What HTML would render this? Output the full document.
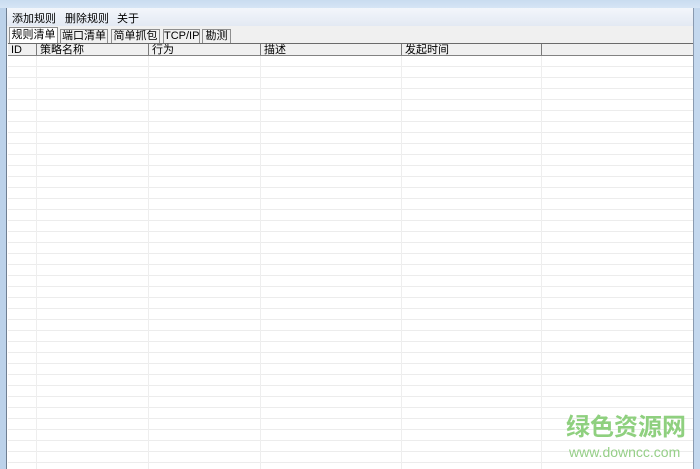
<!DOCTYPE html>
<html><head><meta charset="utf-8"><style>
*{margin:0;padding:0;box-sizing:border-box}
body{width:700px;height:469px;overflow:hidden;background:#fff;font-family:"Liberation Sans","Noto Sans CJK SC","WenQuanYi Zen Hei",sans-serif;font-size:11px;color:#000;position:relative}
.abs{position:absolute}
#top{left:0;top:0;width:700px;height:8px;background:linear-gradient(#c9dcf0,#d6e5f5)}
#lb{left:0;top:8px;width:7px;height:461px;background:#bcd2ea;border-right:1px solid #6f7f92}
#rb{left:693px;top:8px;width:7px;height:461px;background:#c4d8ee;border-left:1px solid #8a9ab0}
#menu{left:7px;top:8px;width:686px;height:18px;background:linear-gradient(#f3f6fb,#e3e9f3)}
#menu span{position:absolute;top:2px;font-size:11px;white-space:nowrap}
#tabs{left:7px;top:26px;width:686px;height:18px;background:#f0f0f0}
.tab{position:absolute;top:3px;height:15px;border:1px solid #8e8e8e;border-bottom:none;background:#f0f0f0;text-align:center;line-height:13px;font-size:11px;white-space:nowrap;overflow:hidden}
#grid{left:8px;top:43px;width:685px;height:426px;background:#fff;border-top:1px solid #6a6a6a;
background-image:repeating-linear-gradient(to bottom,transparent 0,transparent 10px,#ececec 10px,#ececec 11px);background-position:0 12px}
#hdr{left:8px;top:44px;width:685px;height:12px;background:#f0f0f0;border-bottom:1px solid #828282}
.h{position:absolute;top:0;height:11px;line-height:12px;font-size:11px;padding-left:3px;border-right:1px solid #7a7a7a;white-space:nowrap}
.vl{position:absolute;top:56px;width:1px;height:413px;background:#eeeeee}
#wm{left:566px;top:414px;color:#8fd07f;font-size:24px;font-weight:bold;white-space:nowrap;line-height:28px}
#wm2{left:569px;top:444px;color:#96cf88;font-size:14px;white-space:nowrap}
</style></head><body>
<div class="abs" id="top"></div>
<div class="abs" id="lb"></div>
<div class="abs" id="rb"></div>
<div class="abs" id="menu"><span style="left:5px">添加规则</span><span style="left:58px">删除规则</span><span style="left:110px">关于</span></div>
<div class="abs" id="tabs">
<div class="tab" style="left:2px;top:1px;height:17px;width:49px;background:#fff;line-height:15px">规则清单</div>
<div class="tab" style="left:53px;width:48px">端口清单</div>
<div class="tab" style="left:104px;width:49px">简单抓包</div>
<div class="tab" style="left:156px;width:37px">TCP/IP</div>
<div class="tab" style="left:195px;width:29px">勘测</div>
</div>
<div class="abs" id="grid"></div>
<div class="abs" id="hdr">
<div class="h" style="left:0;width:29px">ID</div>
<div class="h" style="left:29px;width:112px">策略名称</div>
<div class="h" style="left:141px;width:112px">行为</div>
<div class="h" style="left:253px;width:141px">描述</div>
<div class="h" style="left:394px;width:140px">发起时间</div>
</div>
<div class="vl" style="left:36px"></div>
<div class="vl" style="left:148px"></div>
<div class="vl" style="left:260px"></div>
<div class="vl" style="left:401px"></div>
<div class="vl" style="left:541px"></div>
<div class="abs" id="wm">绿色资源网</div>
<div class="abs" id="wm2">www.downcc.com</div>
</body></html>
